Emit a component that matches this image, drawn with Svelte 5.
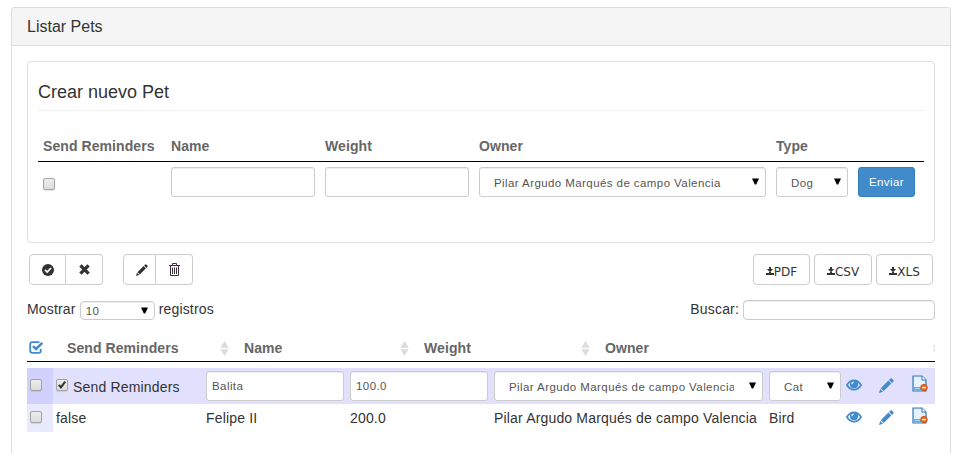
<script>
  const records = [
    { reminders: true, name: 'Balita', weight: '100.0', type: 'Cat', editing: true },
    { reminders: false, name: 'Felipe II', weight: '200.0', type: 'Bird', editing: false }
  ];
  const owner = 'Pilar Argudo Marqués de campo Valencia';
  const exports = [
    { label: 'PDF', width: 57 },
    { label: 'CSV', width: 58 },
    { label: 'XLS', width: 57 }
  ];
</script>

{#snippet arrow()}
  <svg class="arrow" width="7" height="7" viewBox="0 0 7 7"><path d="M0 0.4h7L4.2 6.6H2.8z" fill="#000" /></svg>
{/snippet}

{#snippet sorter()}
  <svg class="sorter" width="9" height="15" viewBox="0 0 9 15"><path d="M0.3 6.8 4.5 0l4.2 6.8zM0.3 8.2h8.4L4.5 15z" fill="#dcdcdc" /></svg>
{/snippet}

{#snippet check(on)}
  <span class="check">
    {#if on}
      <svg width="11" height="11" viewBox="0 0 11 11"><path d="M2 5.4 4.3 8 9 1.8" fill="none" stroke="#333" stroke-width="2.3" /></svg>
    {/if}
  </span>
{/snippet}

{#snippet pencil(size)}
  <svg width={size} height={size} viewBox="0 0 15 15" fill="currentColor">
    <path d="M0 15 1.2 11 4 13.8zM1.8 10.2 9.4 2.6 12.3 5.5 4.7 13.1zM10.1 1.9 11.5.5Q12.1 0 12.8.5L14.5 2.2Q15 2.9 14.4 3.6L13 4.9z" />
  </svg>
{/snippet}

<div class="panel">
  <div class="heading">Listar Pets</div>
  <div class="body">
    <section class="create">
      <div class="legend">Crear nuevo Pet</div>
      <div class="form-head">
        <b class="c-rem">Send Reminders</b><b class="c-text">Name</b><b class="c-text">Weight</b><b class="c-owner">Owner</b><b>Type</b>
      </div>
      <div class="form-row">
        <div class="c-rem">{@render check(false)}</div>
        <div class="c-text"><div class="field w144"></div></div>
        <div class="c-text"><div class="field w144"></div></div>
        <div class="c-owner"><div class="field select w287"><span>{owner}</span>{@render arrow()}</div></div>
        <div class="field select w72"><span>Dog</span>{@render arrow()}</div>
        <div class="send">Enviar</div>
      </div>
    </section>

    <div class="toolbar">
      <div class="group">
        <div class="tool t37">
          <svg width="12" height="12" viewBox="0 0 12 12"><circle cx="6" cy="6" r="6" fill="#333" /><path d="M3 5.9 5.2 8 9 4" fill="none" stroke="#fff" stroke-width="1.8" /></svg>
        </div>
        <div class="tool t37">
          <svg width="11" height="11" viewBox="0 0 10 10"><path d="M1.3 1.3 8.7 8.7M8.7 1.3 1.3 8.7" stroke="#333" stroke-width="3" /></svg>
        </div>
      </div>
      <div class="group second">
        <div class="tool t33">{@render pencil(12)}</div>
        <div class="tool t37">
          <svg width="11" height="13" viewBox="0 0 11 13" fill="none" stroke="#3c303c"><path d="M0 2.5h11M3.5 2V.5h4V2M1.5 3v9.5h8V3M3.5 4.5v6.5M5.5 4.5v6.5M7.5 4.5v6.5" /></svg>
        </div>
      </div>
      <div class="exports">
        {#each exports as item}
          <div class="export" style="width:{item.width}px">
            <svg width="8" height="8" viewBox="0 0 8 8"><path d="M3 0h2v2h2.2L4 5.2.8 2H3zM0 6h8v2H0zM3 5h2v1H3z" fill="#333" /></svg><span>{item.label}</span>
          </div>
        {/each}
      </div>
    </div>

    <div class="filters">
      <span>Mostrar</span>
      <div class="field length"><span>10</span>{@render arrow()}</div>
      <span>registros</span>
      <span class="search-label">Buscar:</span>
      <div class="field search"></div>
    </div>

    <div class="grid-head">
      <svg class="all" width="15" height="13" viewBox="0 0 15 13" fill="none" stroke="#428bca"><path d="M10.5 1.2H3.3Q1.2 1.2 1.2 3.3v6.4Q1.2 11.8 3.3 11.8h6.4Q11.8 11.8 11.8 9.7V8" stroke-width="1.8" /><path d="M4 5.2 7 8 13.3 1.8" stroke-width="2.5" /></svg>
      <div class="hc h1"><b>Send Reminders</b>{@render sorter()}</div>
      <div class="hc h2"><b>Name</b>{@render sorter()}</div>
      <div class="hc h3"><b>Weight</b>{@render sorter()}</div>
      <div class="hc h4"><b>Owner</b>
        <svg class="cut" width="2" height="7" viewBox="0 0 2 7"><path d="M0 1.5h2M0 5.5h2" stroke="#ddd" /><path d="M1.5 0v7" stroke="#e4e4e4" /></svg>
      </div>
    </div>

    {#each records as r}
      <div class="record" class:editing={r.editing}>
        <div class="pick">{@render check(false)}</div>
        <div class="r-rem">
          {#if r.editing}{@render check(r.reminders)}<span class="rem-label">Send Reminders</span>{:else}{r.reminders}{/if}
        </div>
        <div class="r-text">{#if r.editing}<div class="field w138 input"><span>{r.name}</span></div>{:else}{r.name}{/if}</div>
        <div class="r-text">{#if r.editing}<div class="field w138 input"><span>{r.weight}</span></div>{:else}{r.weight}{/if}</div>
        <div class="r-owner">{#if r.editing}<div class="field select w269"><span class="clip">{owner}</span>{@render arrow()}</div>{:else}{owner}{/if}</div>
        <div class="r-type">{#if r.editing}<div class="field select w72"><span>{r.type}</span>{@render arrow()}</div>{:else}{r.type}{/if}</div>
        <div class="actions">
          <svg width="16" height="12" viewBox="0 0 16 12"><path d="M.9 6Q3.7 1.3 8 1.3T15.1 6Q12.3 10.7 8 10.7T.9 6z" fill="none" stroke="#428bca" stroke-width="1.7" /><circle cx="8" cy="5.2" r="4.1" fill="#428bca" /><path d="M5.8 5.2Q5.8 3.2 7.8 3" fill="none" stroke="#fff" stroke-width="1.1" /></svg>
          {@render pencil(15)}
          <svg width="16" height="17" viewBox="0 0 16 17">
            <path d="M1 1h9l4 4v11H1z" fill="#d3e7fb" stroke="#3878b5" stroke-width="1.2" />
            <path d="M2.2 2.2h7v4h3.6v5.5L2.2 13z" fill="#e6f2fe" />
            <path d="M10 1v4h4" fill="#fff" stroke="#3878b5" />
            <path d="M2.5 12.5h6v2h-6z" fill="#a9dcff" stroke="#33a1e8" stroke-width=".8" />
            <circle cx="12" cy="12.6" r="3.3" fill="#ee6717" stroke="#c74306" stroke-width=".7" /><path d="M9.9 12.6h4.2" stroke="#fff" stroke-width="1.4" />
          </svg>
        </div>
      </div>
    {/each}
  </div>
</div>

<style>
  :global(body) { background: #fff; overflow: hidden; }
  .panel { box-sizing: border-box; width: 940px; height: 446px; margin: 7px 0 0 11px; border: 1px solid #ddd; border-bottom: 0; border-radius: 4px 4px 0 0; overflow: hidden; font: 14px/20px "Liberation Sans", Arial, sans-serif; letter-spacing: .17px; color: #333; white-space: nowrap; }
  .panel * { box-sizing: border-box; }
  svg { display: block; flex: none; }
  .heading { height: 38px; padding: 9px 15px; background: #f5f5f5; border-bottom: 1px solid #ddd; font-size: 16px; line-height: 19px; letter-spacing: 0; }
  .body { padding: 15px 15px 0; }
  .create { height: 182px; padding: 0 10px; border: 1px solid #ddd; border-radius: 4px; }
  .legend { height: 49px; padding-top: 19px; border-bottom: 1px solid #eee; font-size: 18px; line-height: 22px; letter-spacing: 0; }
  b { color: #666; letter-spacing: .08px; }
  .form-head { display: flex; height: 51px; padding: 25px 5px 0; border-bottom: 1px solid #000; }
  .form-row { display: flex; padding: 5px 5px 0; }
  .c-rem { width: 128px; }
  div.c-rem { padding-top: 11px; }
  .c-text { width: 154px; }
  .c-owner { width: 297px; }
  .check { display: block; flex: none; width: 12px; height: 12px; border: 1px solid #a3a3a3; border-radius: 2px; background: linear-gradient(#ededed, #dcdcdc); box-shadow: 0 1px 1px rgba(0, 0, 0, .1); }
  .check svg { width: 10px; height: 10px; }
  .field { display: flex; align-items: center; height: 30px; border: 1px solid #ccc; border-radius: 3px; background: #fff; box-shadow: inset 0 1px 1px rgba(0, 0, 0, .075); color: #555; font-size: 11.5px; letter-spacing: .42px; }
  .select { padding: 1px 6px 0 14px; justify-content: space-between; }
  .select .arrow { margin-top: -2px; }
  .input { padding: 0 5px 1px; }
  .w144 { width: 144px; }
  .w138 { width: 138px; }
  .w287 { width: 287px; }
  .w269 { width: 269px; }
  .w72 { width: 72px; }
  .clip { width: 225px; overflow: hidden; }
  .send { width: 57px; height: 30px; margin-left: 10px; border: 1px solid #357ebd; border-radius: 3px; background: #428bca; color: #fff; font-size: 11.5px; letter-spacing: .4px; line-height: 28px; text-align: center; }
  .toolbar { display: flex; padding: 11px 2px 0; }
  .group { display: flex; }
  .second { margin-left: 20px; }
  .tool { display: flex; align-items: center; justify-content: center; height: 31px; border: 1px solid #ccc; }
  .tool:first-child { border-radius: 4px 0 0 4px; }
  .tool:last-child { border-left: 0; border-radius: 0 4px 4px 0; }
  .t37 { width: 37px; }
  .t33 { width: 33px; padding-left: 5px; }
  .exports { display: flex; gap: 4px; margin-left: auto; }
  .export { display: flex; align-items: center; justify-content: center; height: 31px; padding-top: 4px; border: 1px solid #ccc; border-radius: 4px; font: 12px "DejaVu Sans", sans-serif; letter-spacing: 0; }
  .export svg { margin-top: -1px; }
  .filters { display: flex; height: 35px; padding-top: 15px; line-height: 19px; }
  .length { width: 75px; height: 19px; margin: 1px 4px 0; padding: 1px 6px 0 5px; border-radius: 4px; justify-content: space-between; }
  .length .arrow { margin-top: -2px; }
  .search-label { margin-left: auto; }
  .search { width: 192px; height: 20px; margin-left: 4px; border-radius: 4px; }
  .grid-head { display: flex; height: 42px; border-bottom: 1px solid #000; padding-top: 18px; }
  .all { margin: 3px 0 0 2px; }
  .hc { display: flex; justify-content: space-between; }
  .hc .sorter { margin-top: 3px; }
  .hc .cut { margin-top: 7px; }
  .h1 { width: 162px; margin-left: 23px; }
  .h2 { width: 165px; margin-left: 15px; }
  .h3 { width: 166px; margin-left: 15px; }
  .h4 { width: 330px; margin-left: 15px; }
  .record { display: flex; height: 28px; line-height: 28px; }
  .record.editing { height: 36px; margin-top: 6px; background: #e1e1fe; line-height: 38px; }
  .pick { width: 26px; padding: 7px 0 0 3px; background: #eaeaff; }
  .editing .pick { padding-top: 11px; background: #d1d1fe; }
  .r-rem { display: flex; width: 153px; padding-left: 3px; }
  .r-rem .check { margin-top: 11px; }
  .rem-label { margin-left: 5px; }
  .r-text { width: 144px; }
  .r-owner { width: 275px; }
  .r-type { width: 79px; }
  .editing .field { margin-top: 3px; }
  .actions { display: flex; margin-left: -2px; padding-top: 7px; color: #428bca; }
  .actions :global(svg:nth-child(2)) { margin: -1px 0 0 17px; }
  .actions :global(svg:nth-child(3)) { margin: -4px 0 0 18px; }
  .editing .actions { padding-top: 11px; }
</style>
